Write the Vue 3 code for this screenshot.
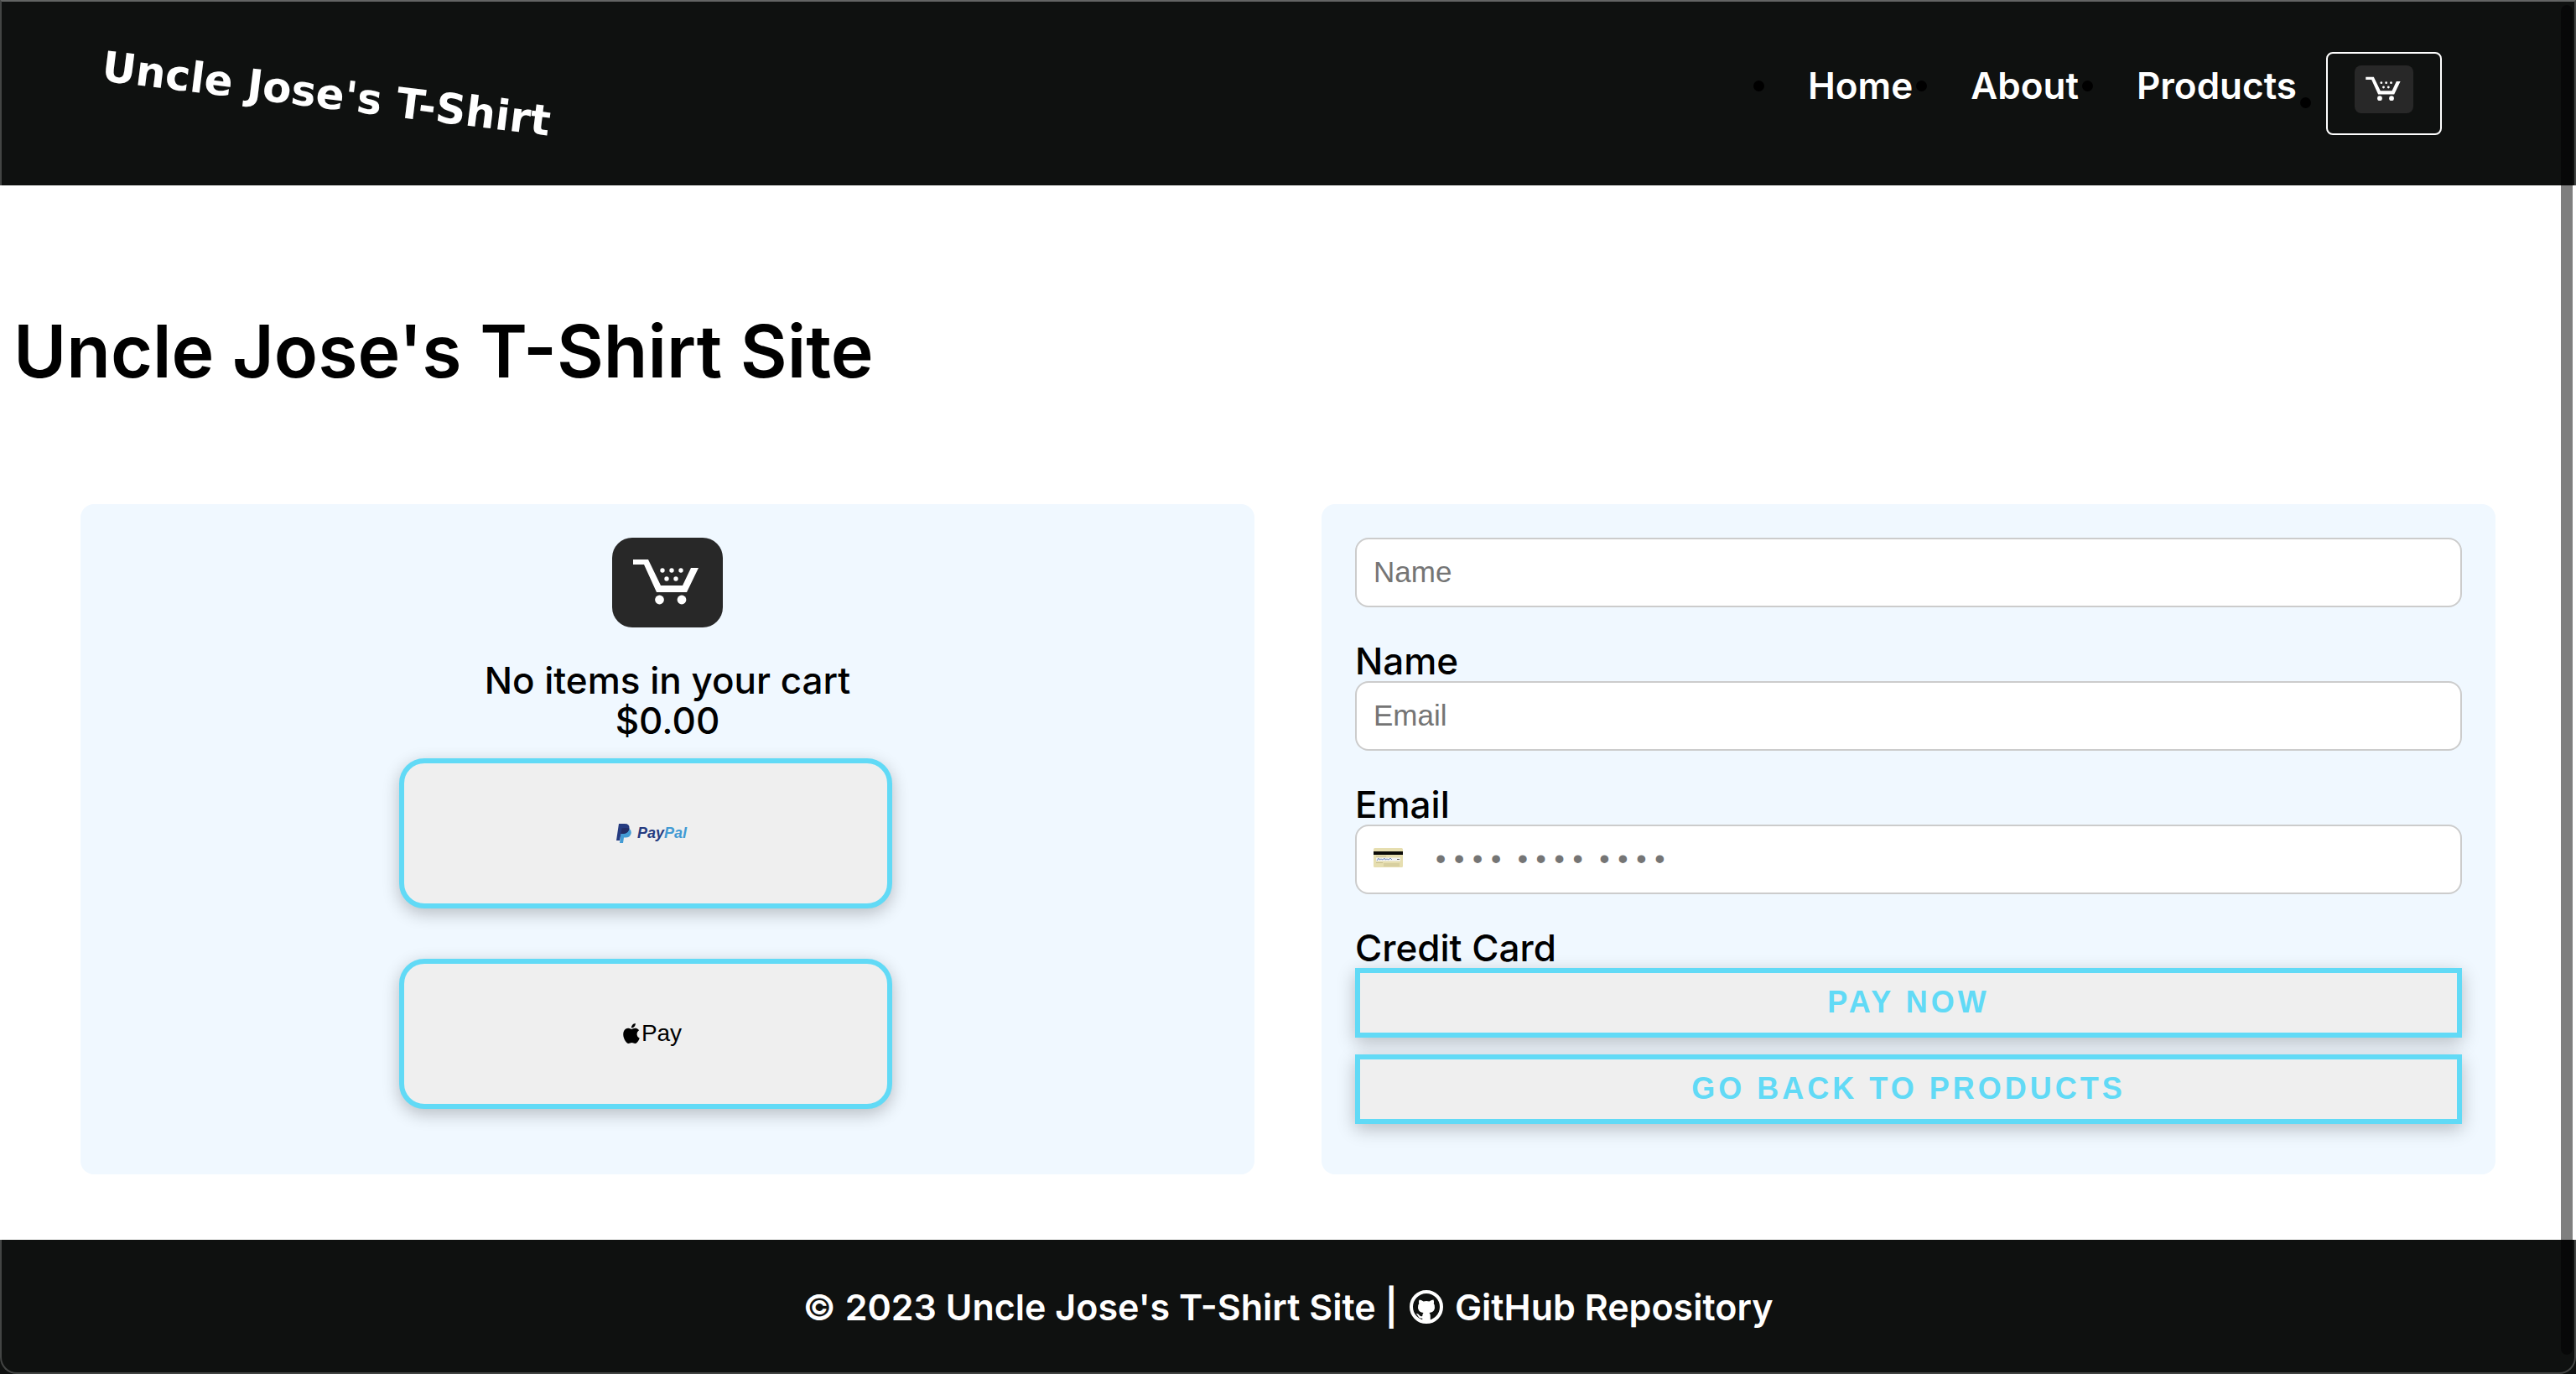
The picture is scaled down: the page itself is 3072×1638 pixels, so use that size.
<script setup>
import { ref } from 'vue'

const links = ['Home', 'About', 'Products']
const payer = ref({ name: '', email: '', card: '' })
const dots = '\u2022 \u2022 \u2022 \u2022'
const cardHint = [dots, dots, dots].join('\u00a0 ')
const basket = [[60, 39], [71, 39], [82, 39], [65, 49], [76, 49]]
</script>

<template>
  <div class="page">
    <header class="header">
      <a class="brand" href="#">Uncle Jose's T-Shirt</a>
      <nav>
        <ul class="menu">
          <li v-for="link in links" :key="link">
            <a class="menu-link" href="#">{{ link }}</a>
          </li>
          <li class="menu-cart">
            <button class="cart-button" type="button" aria-label="Cart">
              <svg class="cart-icon" viewBox="0 0 132 107">
                <path d="M25 26H43L58 57H84L94 36H103L89 65H53L38 32H25Z" />
                <circle v-for="([x, y], i) in basket" :key="i" :cx="x" :cy="y" r="2.7" />
                <circle cx="56.5" cy="74" r="5.4" />
                <circle cx="83" cy="74" r="5.4" />
              </svg>
            </button>
          </li>
        </ul>
      </nav>
    </header>

    <main>
      <h1 class="title">Uncle Jose's T-Shirt Site</h1>
      <div class="checkout">
        <section class="panel summary">
          <svg class="cart-icon large" viewBox="0 0 132 107" aria-hidden="true">
            <path d="M25 26H43L58 57H84L94 36H103L89 65H53L38 32H25Z" />
            <circle v-for="([x, y], i) in basket" :key="i" :cx="x" :cy="y" r="2.7" />
            <circle cx="56.5" cy="74" r="5.4" />
            <circle cx="83" cy="74" r="5.4" />
          </svg>
          <p class="line">No items in your cart</p>
          <p class="line">$0.00</p>
          <div class="wallets">
            <button class="wallet" type="button">
              <svg class="paypal-mark" viewBox="0 0 18 23" aria-hidden="true">
                <path fill="#429bd4" d="M6 6H15.500Q18.500 8 17.500 12Q16.200 16.500 11 16.500H9L8 23H4Z" />
                <path fill="#253b80" d="M3 0H10Q16 0 15.500 5.500Q14.500 12 8 12H5.500L4 20H0Z" />
                <path fill="#222d65" d="M6.500 5.500Q11 4.500 15.500 5.500Q14.500 12 8 12H5.500Z" />
              </svg>
              <span class="paypal">Pay<span class="paypal-pal">Pal</span></span>
            </button>
            <button class="wallet" type="button">
              <svg class="apple-mark" viewBox="0 0 24 24" aria-hidden="true">
                <path d="M12.152 6.896c-.948 0-2.415-1.078-3.96-1.040-2.040.027-3.910 1.183-4.961 3.014-2.117 3.675-.546 9.103 1.519 12.090 1.013 1.454 2.208 3.090 3.792 3.039 1.520-.065 2.090-.987 3.935-.987 1.831 0 2.350.987 3.960.948 1.637-.026 2.676-1.480 3.676-2.948 1.156-1.688 1.636-3.325 1.662-3.415-.039-.013-3.182-1.221-3.220-4.857-.026-3.040 2.480-4.494 2.597-4.559-1.429-2.090-3.623-2.324-4.390-2.376-2-.156-3.675 1.090-4.610 1.090zM15.530 3.830c.843-1.012 1.400-2.427 1.245-3.830-1.207.052-2.662.805-3.532 1.818-.780.896-1.454 2.338-1.273 3.714 1.338.104 2.715-.688 3.559-1.701" />
              </svg>
              <span class="apple-pay">Pay</span>
            </button>
          </div>
        </section>

        <form class="panel" @submit.prevent>
          <input id="name" v-model="payer.name" class="field" type="text" placeholder="Name" />
          <label class="line label" for="name">Name</label>
          <input id="email" v-model="payer.email" class="field" type="email" placeholder="Email" />
          <label class="line label" for="email">Email</label>
          <div class="card-field">
            <input id="card" v-model="payer.card" class="field" type="text" :placeholder="cardHint" />
            <svg class="card-icon" viewBox="0 0 35 23" aria-hidden="true">
              <rect width="35" height="23" rx="1.500" fill="#e6deb0" />
              <rect y="4" width="35" height="4" fill="#0b0b08" />
              <rect x="3" y="11.500" width="29" height="4" fill="#f3f3f3" />
              <path d="M4 15l2-3 1 2 2-1 2 1 2-2 1 2 2-1 2 1 2-2 2 2" fill="none" stroke="#7d93c4" />
              <path d="M28 13.500h3" stroke="#666" />
              <path d="M3 10h12M3 17.500h8M12 19h19M12 21h19" stroke="#c9c08f" />
            </svg>
          </div>
          <label class="line label" for="card">Credit Card</label>
          <button class="action" type="submit">PAY NOW</button>
          <button class="action" type="button">GO BACK TO PRODUCTS</button>
        </form>
      </div>
    </main>

    <footer class="footer">
      <span>© 2023 Uncle Jose's T-Shirt Site |</span>
      <a class="repo" href="#">
        <svg class="github" viewBox="0 0 40 40" aria-hidden="true">
          <circle cx="20" cy="20" r="18" fill="none" stroke="#fff" stroke-width="4" />
          <path fill="#fff" d="M11.500 11.500Q14 11.500 16.500 13.500Q20 12.700 23.500 13.500Q26 11.500 28.500 11.500Q29.500 14 28.800 16Q30.500 18 30 21.500Q29 26.500 23.500 27Q25 28.500 24.800 31V38H15.200V33.500Q11.500 34.300 10 31Q9 29 7.800 28.200Q10 27.500 11.800 30Q13 31.700 15.200 31Q15.300 28.500 16.500 27Q11 26.500 10 21.500Q9.500 18 11.200 16Q10.500 14 11.500 11.500Z" />
        </svg>
        GitHub Repository
      </a>
    </footer>

    <div class="frame" aria-hidden="true"></div>
    <div class="scrollbar" aria-hidden="true"></div>
  </div>
</template>

<style>
body {
  margin: 0;
  background: #fff;
}
</style>

<style scoped>
* {
  box-sizing: border-box;
}
.page {
  position: relative;
  overflow: hidden;
  min-height: 100vh;
  display: flex;
  flex-direction: column;
  font: 500 44px/48px Inter, sans-serif;
  color: #000;
}
a {
  color: inherit;
  text-decoration: none;
}
button {
  cursor: pointer;
}
.header {
  display: flex;
  justify-content: space-between;
  align-items: flex-start;
  padding: 62px 160px 60px 120px;
  background: #0f1110;
  color: #fff;
}
.brand {
  margin-top: 26px;
  font: 700 50px/48px "DejaVu Sans", sans-serif;
  transform: rotate(7deg);
}
.menu {
  display: flex;
  align-items: flex-start;
  margin: 0;
  padding: 0;
  list-style: none;
  font-weight: 600;
}
.menu li {
  display: flex;
  align-items: center;
}
.menu li::before {
  content: "";
  width: 13px;
  height: 13px;
  border-radius: 50%;
  background: #000;
}
.menu-link {
  padding: 16px 4px 16px 52px;
}
.menu .menu-cart::before {
  margin: 22px 18px 0 0;
}
.cart-button {
  display: flex;
  padding: 14px 32px 24px;
  border: 2px solid #fff;
  border-radius: 8px;
  background: transparent;
}
.cart-icon {
  width: 70px;
  border-radius: 8px;
  background: #282828;
  fill: #fff;
}
.cart-icon.large {
  width: 132px;
  margin-bottom: 39px;
  border-radius: 24px;
}
main {
  flex: 1;
}
.title {
  margin: 148px 16px 132px;
  font-size: 86px;
  line-height: 100px;
  font-weight: 600;
}
.checkout {
  display: grid;
  grid-template-columns: 1fr 1fr;
  gap: 80px;
  padding: 0 96px 76px;
}
.panel {
  display: flex;
  flex-direction: column;
  padding: 40px;
  border-radius: 16px;
  background: #f0f8ff;
}
.summary {
  align-items: center;
}
.line {
  margin: 0;
}
.wallets {
  display: flex;
  flex-direction: column;
  gap: 60px;
  margin-top: 21px;
  padding-right: 52px;
}
.wallet {
  display: flex;
  align-items: center;
  justify-content: center;
  width: 588px;
  height: 179px;
  padding: 0 0 0 14px;
  border: 6px solid #61daf6;
  border-radius: 30px;
  background: #efefef;
  box-shadow: 0 6px 20px rgba(0, 0, 0, 0.24);
}
.paypal-mark {
  width: 18px;
  margin-right: 7px;
}
.paypal {
  font: italic 700 18px/24px "Liberation Sans", sans-serif;
  color: #253b80;
}
.paypal-pal {
  color: #429bd4;
}
.apple-mark {
  width: 24px;
}
.apple-pay {
  font: 400 28px/32px "Liberation Sans", sans-serif;
  color: #000;
}
.field {
  display: block;
  width: 100%;
  height: 83px;
  padding: 0 20px;
  border: 2px solid #ccc;
  border-radius: 16px;
  background: #fff;
  font: 400 35px/40px "Liberation Sans", Arial, sans-serif;
}
.field::placeholder {
  color: #757575;
  opacity: 1;
}
.label {
  margin-top: 40px;
}
.card-field {
  position: relative;
}
.card-field .field {
  padding-left: 94px;
}
.card-icon {
  position: absolute;
  top: 28px;
  left: 22px;
  width: 35px;
}
.action {
  height: 83px;
  margin-bottom: 20px;
  border: 6px solid #61daf6;
  background: #efefef;
  box-shadow: 0 6px 20px rgba(0, 0, 0, 0.24);
  font: 700 36px/40px "Liberation Sans", Arial, sans-serif;
  letter-spacing: 4px;
  color: #61daf6;
}
.footer {
  display: flex;
  justify-content: center;
  align-items: center;
  gap: 14px;
  min-height: 160px;
  background: #0f1110;
  color: #fff;
  font-size: 43px;
  font-weight: 600;
}
.repo {
  display: flex;
  align-items: center;
  gap: 14px;
}
.github {
  width: 40px;
}
.frame {
  position: absolute;
  inset: 0;
  border: 2px solid rgba(255, 255, 255, 0.22);
  border-top-color: rgba(255, 255, 255, 0.35);
  border-radius: 0 0 20px 20px;
  box-shadow: 0 0 0 20px #0f1110;
  pointer-events: none;
}
.scrollbar {
  position: absolute;
  top: 6px;
  right: 4px;
  bottom: 23px;
  width: 14px;
  border-radius: 7px;
  background: rgba(0, 0, 0, 0.5);
}
</style>
